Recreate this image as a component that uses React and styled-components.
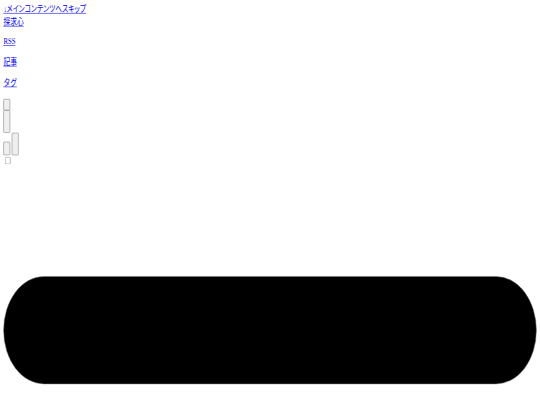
import React from "react";
import styled, { createGlobalStyle } from "styled-components";

const Global = createGlobalStyle`
  html, body { margin: 0; padding: 0; background: #fff; overflow: hidden; }
  body { font-family: "Liberation Serif", "Noto Sans CJK JP", serif; }
`;

const Frame = styled.div`
  width: 540px;
  height: 405px;
  overflow: hidden;
`;

/* The page is laid out at 1280×720 and shown squeezed into 540×405,
   as the reference photo was taken. */
const Stage = styled.div`
  width: 1280px;
  height: 720px;
  transform: scale(0.421875, 0.5625);
  transform-origin: 0 0;
`;

const Page = styled.div`
  box-sizing: border-box;
  padding: 5px 8px 8px;
  font-size: 16px;
  line-height: 23px;
`;

const Link = styled.a`
  display: block;
  width: max-content;
  color: #0000ee;
  text-decoration: underline;
  font-feature-settings: ${(p) => (p.$palt ? '"palt"' : "normal")};
`;

const Header = styled.header`
  display: block;
`;

const Nav = styled.ul`
  list-style: none;
  margin: 11px 0 0 0;
  padding: 0;
  display: flex;
  flex-direction: column;
  gap: 14px;
`;

const Controls = styled.div`
  margin-top: 17px;
  display: flex;
  flex-direction: column;
  align-items: flex-start;
`;

const Btn = styled.button`
  box-sizing: border-box;
  display: block;
  width: 16px;
  height: ${(p) => p.$h}px;
  padding: 0;
  margin: 0;
  background: #efefef;
  border: 1px solid #767676;
  border-radius: 2px;
`;

const Row = styled.div`
  display: flex;
  align-items: flex-end;
  gap: 4px;
`;

const Check = styled.input.attrs({ type: "checkbox" })`
  display: block;
  width: 13px;
  height: 13px;
  margin: 3px 3px 3px 4px;
`;

const Pill = styled.div`
  box-sizing: border-box;
  margin-top: 196px;
  width: 1264px;
  height: 192px;
  background: #000;
  border: 1px solid #767676;
  border-radius: 9999px;
`;

export default function App() {
  return (
    <Frame>
      <Global />
      <Stage>
        <Page>
          <Link href="#main" $palt>↓メインコンテンツへスキップ</Link>
          <Header>
            <Link href="#">探求心</Link>
            <Nav>
              <li><Link href="#">RSS</Link></li>
              <li><Link href="#">記事</Link></li>
              <li><Link href="#">タグ</Link></li>
            </Nav>
          </Header>
          <Controls>
            <Btn $h={20} aria-label="menu" />
            <Btn $h={40} aria-label="search" />
            <Row>
              <Btn $h={24} aria-label="theme" />
              <Btn $h={40} aria-label="language" />
            </Row>
            <Check aria-label="toggle" />
          </Controls>
          <Pill id="main" />
        </Page>
      </Stage>
    </Frame>
  );
}
